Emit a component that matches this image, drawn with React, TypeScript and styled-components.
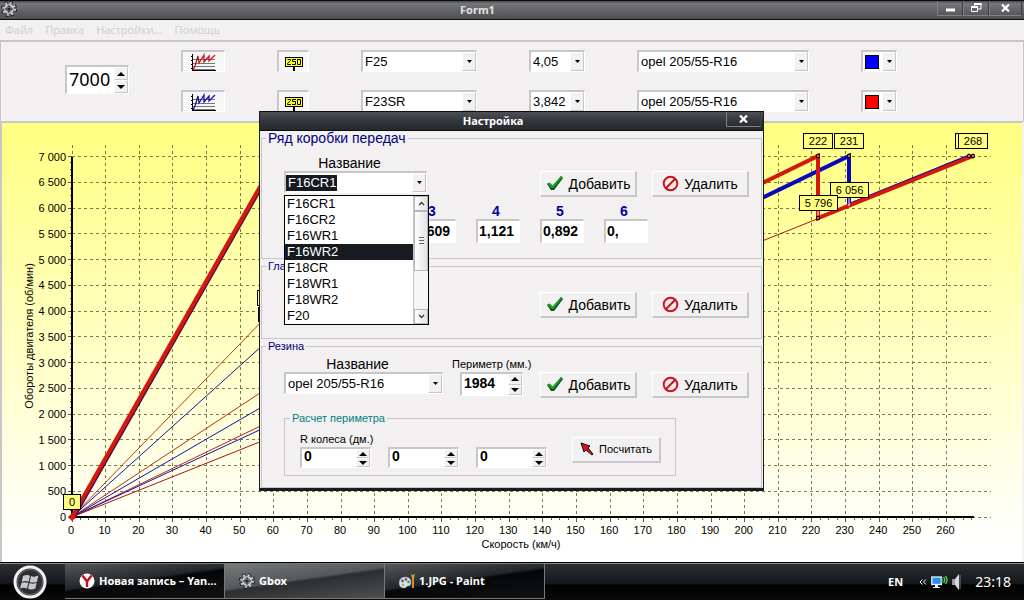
import React from "react";
import styled, { createGlobalStyle, css } from "styled-components";

const sans = '"Liberation Sans", Arial, sans-serif';
const ui = '"Noto Sans", "Open Sans", sans-serif';

const face = "#f2f0f1";
const shade = "#c8c6c8";

const Global = createGlobalStyle`
  *, *::before, *::after { box-sizing: border-box; }
  body { margin: 0; background: ${face}; font-family: ${sans}; font-size: 13px; color: #000; }
  button, input, select { font: inherit; color: inherit; margin: 0; border-radius: 0; }
`;

const sunken = css`
  border: 1px solid;
  border-width: 2px 1px 1px 2px;
  border-color: ${shade} #fff #fff ${shade};
`;

const raised = css`
  border: 1px solid;
  border-color: #fff ${shade} ${shade} #fff;
`;

/* ---------- window frame ---------- */

const Desktop = styled.div`
  position: relative;
  min-height: 100vh;
  display: flex;
  flex-direction: column;
`;

const TitleBar = styled.header<{ $dark?: boolean }>`
  display: flex;
  height: 20px;
  padding-right: 2px;
  color: ${(p) => (p.$dark ? "#fff" : "#e2e2e2")};
  border-top: 1px solid #0c0c10;
  border-bottom: 1px solid #0c0c10;
  background: ${(p) =>
    p.$dark
      ? "linear-gradient(#4c5054, #33373b 50%, #26292c)"
      : "linear-gradient(#4a4a4e, #77777a 15%, #606264 55%, #4d5053)"};
`;

const TitleIcon = styled.span`
  width: 18px;
  padding-left: 1px;
`;

const TitleText = styled.h1`
  flex: 1;
  margin: 0;
  text-align: center;
  font: bold 11px/18px ${ui};
`;

const CaptionButton = styled.button<{ $w: number }>`
  width: ${(p) => p.$w}px;
  height: 15px;
  padding: 0;
  display: grid;
  place-items: center;
  background: none;
  border: 1px solid #7e8285;
  border-top: 0;
  border-right-color: #3a3d40;
  color: #fff;
`;

const MenuBar = styled.nav`
  display: flex;
  gap: 12px;
  height: 20px;
  padding-left: 5px;
`;

const MenuItem = styled.button`
  padding: 0;
  border: 0;
  background: none;
  font: 11px/18px "Open Sans", ${ui};
  color: #cfcdcf;
`;

/* ---------- form controls ---------- */

const Toolbar = styled.section`
  display: flex;
  height: 81px;
  border: solid ${shade};
  border-width: 2px 1px 0 1px;
  padding: 8px 0 0 64px;
`;

const ToolGrid = styled.div`
  display: grid;
  grid-template-columns: 44px 32px 116px 56px 172px 36px;
  grid-auto-rows: 22px;
  gap: 18px 52px;
  margin-left: 52px;
`;

const ToolButton = styled.button`
  ${sunken}
  padding: 0;
  display: grid;
  place-items: start center;
  overflow: hidden;
  background: #f8f7f8;
`;

const SpinBox = styled.span<{ $w: number; $h: number }>`
  ${sunken}
  display: flex;
  width: ${(p) => p.$w}px;
  height: ${(p) => p.$h}px;
  background: #fff;
`;

const SpinInput = styled.input<{ $big?: boolean }>`
  flex: 1;
  min-width: 0;
  border: 0;
  padding: 0 0 3px 2px;
  background: none;
  outline: 0;
  font: ${(p) => (p.$big ? `18px/22px ${ui}` : `bold 14px/15px ${sans}`)};
`;

const SpinButtons = styled.span`
  display: flex;
  flex-direction: column;
  width: 14px;
`;

const SpinButton = styled.button`
  ${raised}
  flex: 1;
  min-height: 0;
  padding: 0;
  display: grid;
  place-items: center;
  background: ${face};
`;

const ComboBox = styled.span<{ $w?: number }>`
  ${sunken}
  display: flex;
  width: ${(p) => (p.$w ? `${p.$w}px` : "auto")};
  height: 22px;
  position: relative;
  background: #fff;
`;

const comboText = css`
  flex: 1;
  min-width: 0;
  border: 0;
  background: none;
  outline: 0;
  text-align: left;
  font: 13px/18px ${sans};
`;

const ComboSelect = styled.select`
  ${comboText}
  appearance: none;
  padding: 0 14px 0 2px;
`;

const ComboButton = styled.button`
  ${comboText}
  padding: 0 14px 0 0;
`;

const Selected = styled.span`
  display: inline-block;
  padding: 0 1px 0 2px;
  background: #161b21;
  color: #fff;
  line-height: 16px;
`;

const ComboArrow = styled.span`
  ${raised}
  position: absolute;
  inset: 0 0 0 auto;
  width: 14px;
  display: grid;
  place-items: center;
  background: ${face};
  pointer-events: none;
`;

const ColorButton = styled.button`
  ${sunken}
  position: relative;
  padding: 1px 2px;
  background: #fff;
`;

const Swatch = styled.span<{ $c: string }>`
  display: block;
  width: 14px;
  height: 14px;
  border: 1px solid #000;
  background: ${(p) => p.$c};
`;

/* ---------- settings dialog ---------- */

const Dialog = styled.section`
  position: absolute;
  left: calc(50% - 253px);
  top: 111px;
  width: 505px;
  background: ${face};
  border: solid #1a1d20;
  border-width: 0 1px 3px;
`;

const Group = styled.fieldset<{ $h: number; $top: number }>`
  margin: 0 1px;
  min-width: 0;
  height: ${(p) => p.$h}px;
  padding: ${(p) => p.$top}px 12px 0 22px;
  border: 1px solid ${shade};
`;

const Legend = styled.legend<{ $size: number; $color?: string; $pull: number }>`
  margin-left: ${(p) => -p.$pull}px;
  padding: 0 2px;
  font-size: ${(p) => p.$size}px;
  line-height: 14px;
  color: ${(p) => p.$color ?? "#000080"};
`;

const FieldRow = styled.div`
  display: flex;
  align-items: flex-start;
`;

const Field = styled.div<{ $w: number; $left?: number }>`
  position: relative;
  display: flex;
  flex-direction: column;
  width: ${(p) => p.$w}px;
  margin-left: ${(p) => p.$left ?? 0}px;
`;

const Caption = styled.label<{ $size: number; $center?: boolean }>`
  padding-right: ${(p) => (p.$center ? 12 : 0)}px;
  font-size: ${(p) => p.$size}px;
  line-height: 16px;
  white-space: nowrap;
  text-align: ${(p) => (p.$center ? "center" : "left")};
`;

const Actions = styled.div`
  display: flex;
  gap: 15px;
  margin: 16px 0 0 auto;
`;

const ActionButton = styled.button<{ $w: number; $size: number }>`
  border: 1px solid;
  border-width: 1px 2px 2px 1px;
  border-color: #fff ${shade} ${shade} #fff;
  display: flex;
  align-items: center;
  justify-content: center;
  gap: 5px;
  width: ${(p) => p.$w}px;
  height: 26px;
  padding: 0;
  background: ${face};
  font-size: ${(p) => p.$size}px;
  white-space: nowrap;
`;

const GearRow = styled.div`
  display: grid;
  grid-template-columns: repeat(4, 44px);
  gap: 20px;
  margin: 6px 0 0 128px;
`;

const GearField = styled.label`
  display: flex;
  flex-direction: column;
  font: bold 14px/16px ${sans};
  color: #0000a0;
  text-align: center;
`;

const GearNumber = styled.span`
  padding-right: 4px;
`;

const GearInput = styled.input`
  ${sunken}
  width: 100%;
  height: 24px;
  padding: 0 0 2px 1px;
  background: #fff;
  color: #000;
  outline: 0;
`;

const PerimeterBox = styled.fieldset`
  width: 392px;
  height: 65px;
  min-width: 0;
  margin: 13px 0 0;
  padding: 5px 13px 6px 15px;
  border: 1px solid ${shade};
  display: flex;
  align-items: center;
`;

const SpinRow = styled.div`
  display: flex;
  gap: 17px;
`;

const DropList = styled.ul`
  position: absolute;
  top: 40px;
  left: 0;
  z-index: 2;
  width: 145px;
  margin: 0;
  padding: 0 15px 0 0;
  border: 1px solid #000;
  background: #fff;
  list-style: none;
`;

const DropItem = styled.li<{ $on: boolean }>`
  padding-left: 2px;
  font: 13px/16px ${sans};
  background: ${(p) => (p.$on ? "#161b21" : "none")};
  color: ${(p) => (p.$on ? "#fff" : "#000")};
`;

const ScrollBar = styled.li`
  position: absolute;
  inset: 0 0 0 auto;
  width: 15px;
  display: flex;
  flex-direction: column;
  border-left: 1px solid ${shade};
  background: #f6f5f6;
`;

const ScrollPart = styled.span<{ $h: number }>`
  border: 1px solid #b8b6b8;
  height: ${(p) => p.$h}px;
  display: grid;
  place-items: center;
  background: linear-gradient(90deg, #fff, #e4e2e4);

  &:last-child { margin-top: auto; }
`;

/* ---------- chart ---------- */

const ChartFrame = styled.section`
  border: solid ${shade};
  border-width: 2px 2px 0;
  border-right-color: #f4f3f4;
  background: linear-gradient(#ffff80, #ffffff 96%);

  svg { display: block; width: 100%; height: auto; }
  text { font: 11px ${sans}; }
`;

/* ---------- taskbar ---------- */

const TaskBar = styled.footer`
  display: flex;
  height: 38px;
  margin-top: auto;
  border-top: 1px solid #000;
  background: linear-gradient(#8a8c8e 1px, #2b2f34 1px, #14171b 55%, #000 60%, #0a0a0a);
  color: #fff;
`;

const StartButton = styled.button`
  width: 65px;
  padding: 0 0 0 13px;
  border: 0;
  background: none;
  text-align: left;

  svg { display: block; }
`;

const Task = styled.button<{ $active?: boolean }>`
  display: flex;
  align-items: center;
  gap: 4px;
  width: 160px;
  height: 36px;
  padding: 0 0 0 14px;
  border: solid #77797b;
  border-width: 1px 1px 1px 0;
  background: ${(p) =>
    p.$active
      ? "linear-gradient(172deg, #77797b, #55585a 45%, #2c2e30 50%, #4d4f51)"
      : "linear-gradient(172deg, #55585b, #24272a 45%, #060708 50%, #101112)"};
  font: bold 11px/16px ${ui};
  color: #fff;
  white-space: nowrap;
`;

const Tray = styled.div`
  display: flex;
  align-items: center;
  margin-left: auto;
  padding-right: 13px;
  font: bold 11px/16px ${ui};
`;

const Clock = styled.time`
  margin-left: 13px;
  font: 14px/16px ${ui};
`;

const TrayIcons = styled.span`
  display: flex;
  align-items: center;
  gap: 4px;
  margin-left: 16px;
`;

/* ---------- drawings ---------- */

const Tri = ({ up, w = 8 }: { up?: boolean; w?: number }) => {
  const h = Math.ceil(w / 2);
  return (
    <svg width={w} height={h} viewBox={`0 0 ${w} ${h}`} aria-hidden>
      <path d={up ? `M0 ${h}L${w / 2} 0L${w} ${h}z` : `M0 0L${w} 0L${w / 2} ${h}z`} fill="#000" />
    </svg>
  );
};

const Chevron = ({ up }: { up?: boolean }) => (
  <svg width="7" height="5" viewBox="0 0 7 5" aria-hidden>
    <path d={up ? "M1 4L3.500 1.500L6 4" : "M1 1L3.500 3.500L6 1"} fill="none" stroke="#444" strokeWidth="1.500" />
  </svg>
);

const Gear = () => (
  <svg width="16" height="16" viewBox="0 0 16 16" aria-hidden>
    <circle cx="8" cy="8" r="6" fill="none" stroke="#16181a" strokeWidth="4" strokeDasharray="2.600 2.110" />
    <circle cx="8" cy="8" r="5.800" fill="none" stroke="#c9cbcb" strokeWidth="2.400" strokeDasharray="2 2.555" />
    <circle cx="8" cy="8" r="4" fill="#7a7d7e" stroke="#d5d7d7" strokeWidth="1.600" />
    <circle cx="8" cy="8" r="1.600" fill="#222" />
    <path d="M8 4v2M8 10v2M4 8h2M10 8h2" stroke="#222" />
  </svg>
);

const CloseGlyph = () => (
  <svg width="9" height="8" viewBox="0 0 9 8" aria-hidden>
    <path d="M1 0.500L8 7.500M8 0.500L1 7.500" stroke="#fff" strokeWidth="2.200" />
  </svg>
);

const CurveIcon = ({ color }: { color: string }) => (
  <svg width="26" height="21" viewBox="0 0 26 21" aria-hidden>
    <path d="M2 7.500h22M2 11.500h22M2 14.500h22M2 17.500h22" stroke="#777" shapeRendering="crispEdges" />
    <path
      d="M1.500 2v16.500H25M5.500 18v3M8.500 18v3M11.500 18v3M14.500 18v3M17.500 18v3M20.500 18v3M23.500 18v3M0 4.500h1M0 8.500h1M0 12.500h1M0 16.500h1"
      fill="none"
      stroke="#000"
      shapeRendering="crispEdges"
    />
    <path d="M2 18L4 14L7 4L8 11L13 3V10L18 4V9L24 3" fill="none" stroke={color} strokeWidth="1.300" />
  </svg>
);

const SignIcon = () => (
  <svg width="20" height="19" viewBox="0 0 20 19" aria-hidden>
    <rect x="1.500" y="5.500" width="17" height="9" fill="#ffff30" stroke="#000" />
    <path d="M3.500 7.500h3v1l-3 3v1h3.500M12 7.500H8.500v2H11.500v3H8M13.500 7.500h3v5h-3z" fill="none" stroke="#000" />
    <path d="M10 15v4" stroke="#000" strokeWidth="2" />
  </svg>
);

const CheckIcon = () => (
  <svg width="18" height="17" viewBox="0 0 18 17" aria-hidden>
    <path d="M1 9L4 8L7 11L15 1L17 3L8 15L5 15z" fill="#0b4f12" />
    <path d="M1 8.500L3.500 7.500L6.500 10.500L15 1L16.500 2L7.500 13L5.500 13z" fill="#18a025" />
  </svg>
);

const BanIcon = () => (
  <svg width="17" height="17" viewBox="0 0 17 17" aria-hidden>
    <circle cx="8.500" cy="8.500" r="6.800" fill="#fbe9ea" stroke="#c4161f" strokeWidth="2" />
    <path d="M4 13L13 4" stroke="#c4161f" strokeWidth="2" />
  </svg>
);

const PointerIcon = () => (
  <svg width="14" height="14" viewBox="0 0 14 14" aria-hidden>
    <path d="M1 1L10 4L8 6L13 12L12 13L6 8L4 10z" fill="#d3161c" stroke="#200608" strokeWidth="1" />
  </svg>
);

const StartOrb = () => (
  <svg width="34" height="36" viewBox="0 0 34 36" aria-hidden>
    <circle cx="17" cy="18" r="15" fill="#2c2e31" stroke="#f2f2f2" strokeWidth="3" />
    <circle cx="17" cy="18" r="12.500" fill="none" stroke="#6a6d70" />
    <path
      d="M10 12q3.500-2 7-.3l-1.400 6q-3.300-1.500-6.900.2zM18 12q3.500 1.500 7.500-.5l-1.500 6.200q-3.800 1.700-7.300.2zM8.400 19q3.400-1.600 6.900-.1L14 24.600q-3.200-1.500-6.800 0zM16.400 19.100q3.600 1.500 7.300-.3L22.300 24.500q-3.600 1.800-7.200.3z"
      fill="#c6c8c9"
    />
  </svg>
);

const BrowserIcon = () => (
  <svg width="16" height="16" viewBox="0 0 16 16" aria-hidden>
    <circle cx="8" cy="8" r="7.500" fill="#fff" />
    <path d="M3.500 2.500L8 8.500V14M12.500 2.500L8 8.500" fill="none" stroke="#c3121d" strokeWidth="2.400" />
  </svg>
);

const PaintIcon = () => (
  <svg width="16" height="16" viewBox="0 0 16 16" aria-hidden>
    <path d="M6 4C2 4 0 7 0 10s2 5 5 5 2-2 4-2 3-1 3-4-2-5-6-5z" fill="#cfe6ee" stroke="#5b8ba0" strokeWidth=".5" />
    <circle cx="3.500" cy="8" r="1.400" fill="#2a68c8" />
    <circle cx="7" cy="6.500" r="1.400" fill="#d8362c" />
    <circle cx="9.500" cy="9" r="1.300" fill="#2f9a3a" />
    <circle cx="4" cy="12" r="1.300" fill="#e8a020" />
    <path d="M13 6h2v9h-2z" fill="#e6862a" />
    <path d="M13 6l-1-5 2 1 2-1-1 5z" fill="#c89a50" />
  </svg>
);

const NetworkIcon = () => (
  <svg width="17" height="14" viewBox="0 0 17 14" aria-hidden>
    <rect x=".8" y="2" width="9.500" height="7.500" fill="#2f8fe8" stroke="#e8f4ff" strokeWidth="1.300" />
    <path d="M4 10h3v2h2v1H2v-1h2z" fill="#e8f4ff" />
    <path d="M10.500 3q1.500 2 0 4M12.500 2q2.500 3 0 6M14.500 1q3 4 0 8" fill="none" stroke="#4fd040" strokeWidth="1.300" />
  </svg>
);

const SpeakerIcon = () => (
  <svg width="10" height="16" viewBox="0 0 10 16" aria-hidden>
    <path d="M0 5h3v6H0z" fill="#9a9a9e" />
    <path d="M3 5L7 0v16L3 11z" fill="#d8d8dc" />
    <path d="M8 1v14" stroke="#77777b" />
  </svg>
);

/* ---------- composed controls ---------- */

const Combo = ({ value, label, w, id }: { value: string; label: string; w?: number; id?: string }) => (
  <ComboBox $w={w}>
    <ComboSelect id={id} aria-label={label} defaultValue={value}>
      <option>{value}</option>
    </ComboSelect>
    <ComboArrow>
      <Tri w={5} />
    </ComboArrow>
  </ComboBox>
);

const Spin = (p: { value: string; label: string; w: number; h: number; big?: boolean; id?: string }) => (
  <SpinBox $w={p.w} $h={p.h}>
    <SpinInput id={p.id} aria-label={p.label} defaultValue={p.value} $big={p.big} />
    <SpinButtons>
      <SpinButton aria-label="Больше">
        <Tri up />
      </SpinButton>
      <SpinButton aria-label="Меньше">
        <Tri />
      </SpinButton>
    </SpinButtons>
  </SpinBox>
);

const AddRemove = () => (
  <Actions>
    <ActionButton $w={97} $size={14}>
      <CheckIcon />
      Добавить
    </ActionButton>
    <ActionButton $w={97} $size={14}>
      <BanIcon />
      Удалить
    </ActionButton>
  </Actions>
);

/* ---------- chart plot ---------- */

const px = (speed: number) => 70 + speed * 3.3635;
const py = (rpm: number) => 394 - rpm * 0.0515;
const range = (n: number) => Array.from({ length: n }, (_, i) => i);
const RED = "#d4180c";
const BLUE = "#0808b8";

const thinLines: [number, number, string][] = [
  [104, 7000, "#b8400c"],
  [119, 7000, "#1414a0"],
  [162.5, 7000, "#b8300c"],
  [185, 7000, "#1414a0"],
  [222, 7000, "#b82020"],
  [231, 7000, "#1414a0"],
  [268, 7000, "#a01818"],
];

const marks: [number, number, number, string][] = [
  [953, 10, 29, ""],
  [956, 10, 29, "268"],
  [801, 10, 29, "222"],
  [832, 10, 29, "231"],
  [828, 59, 38, "6 056"],
  [797, 72, 38, "5 796"],
  [61, 371, 17, "0"],
  [255, 167, 29, ""],
];

const Chart = () => (
  <ChartFrame>
    <svg viewBox="0 0 1020 439" role="img" aria-label="Обороты двигателя от скорости">
      <g stroke="#7c7c46" strokeDasharray="3 3" shapeRendering="crispEdges">
        {range(27).map((i) => (
          <line key={i} x1={px(i * 10)} x2={px(i * 10)} y1={22} y2={394} />
        ))}
        {range(15).map((i) => (
          <line key={i} x1={70} x2={989} y1={py(i * 500)} y2={py(i * 500)} />
        ))}
      </g>
      <g stroke="#555" shapeRendering="crispEdges">
        {range(108).map((i) => (
          <line key={i} x1={px(i * 2.5)} x2={px(i * 2.5)} y1={394} y2={i % 4 ? 397 : 399} />
        ))}
        {range(57).map((i) => (
          <line key={i} y1={py(i * 125)} y2={py(i * 125)} x1={i % 4 ? 68 : 66} x2={70} />
        ))}
      </g>
      <path d={`M70 ${py(7000)}V394H972`} fill="none" stroke="#000" strokeWidth="2" shapeRendering="crispEdges" />
      {thinLines.map(([v, r, c]) => (
        <line key={v} x1={70} y1={394} x2={px(v)} y2={py(r)} stroke={c} />
      ))}
      <g fill="none" strokeWidth="4">
        <path d={`M71 395L${px(61.4)} ${py(7000)}`} stroke="#4a0a50" />
        <path d={`M70 394L${px(61)} ${py(7000)}`} stroke={RED} />
        <path d={`M${px(185)} ${py(5560)}L847 33V82L968 33`} stroke={BLUE} />
        <path d={`M${px(162.5)} ${py(5130)}L816 33V95L971 33`} stroke={RED} />
      </g>
      <path d="M847 74v9M816 87v9" stroke="#fff" />
      <g fill="#fff" stroke="#300" strokeWidth="1.500">
        {[[816, 33], [847, 33], [967, 33], [971, 33], [816, 95]].map(([x, y]) => (
          <ellipse key={`${x}-${y}`} cx={x} cy={y} rx="1.400" ry="1.800" />
        ))}
      </g>
      <path d="M66 394l4-4l4 4l-4 4z" fill={RED} />
      <path d="M257 184v15" stroke="#000" strokeWidth="2" />
      {marks.map(([x, y, w, t]) => (
        <g key={`${x}-${y}`}>
          <rect x={x + 0.5} y={y + 0.5} width={w} height={15} fill="#ffff80" stroke="#000" />
          {t && (
            <text x={x + w / 2 + 0.5} y={y + 12} textAnchor="middle">
              {t}
            </text>
          )}
        </g>
      ))}
      {range(15).map((i) => (
        <text key={i} x={64} y={py(i * 500) + 4} textAnchor="end">
          {i < 2 ? i * 500 : `${Math.floor(i / 2)} ${i % 2 ? "500" : "000"}`}
        </text>
      ))}
      {range(27).map((i) => (
        <text key={i} x={px(i * 10) - 1} y={411} textAnchor="middle">
          {i * 10}
        </text>
      ))}
      <text x={519} y={425} textAnchor="middle">
        Скорость (км/ч)
      </text>
      <text transform="translate(31 213) rotate(-90)" textAnchor="middle">
        Обороты двигателя (об/мин)
      </text>
    </svg>
  </ChartFrame>
);

/* ---------- dialog ---------- */

const boxes = ["F16CR1", "F16CR2", "F16WR1", "F16WR2", "F18CR", "F18WR1", "F18WR2", "F20"];
const upperGears: [number, string][] = [
  [3, "1,609"],
  [4, "1,121"],
  [5, "0,892"],
  [6, "0,"],
];

const Settings = () => (
  <Dialog role="dialog" aria-label="Настройка">
    <TitleBar $dark>
      <TitleText as="h2">Настройка</TitleText>
      <CaptionButton $w={35} aria-label="Закрыть">
        <CloseGlyph />
      </CaptionButton>
    </TitleBar>
    <Group $h={128} $top={10}>
      <Legend $size={14} $pull={18}>
        Ряд коробки передач
      </Legend>
      <FieldRow>
        <Field $w={143}>
          <Caption $size={14} $center htmlFor="gearbox">
            Название
          </Caption>
          <ComboBox>
            <ComboButton id="gearbox" aria-haspopup="listbox" aria-expanded>
              <Selected>F16CR1</Selected>
            </ComboButton>
            <ComboArrow>
              <Tri w={5} />
            </ComboArrow>
          </ComboBox>
          <DropList role="listbox">
            {boxes.map((b) => (
              <DropItem key={b} role="option" $on={b === "F16WR2"} aria-selected={b === "F16WR2"}>
                {b}
              </DropItem>
            ))}
            <ScrollBar aria-hidden>
              <ScrollPart $h={15}>
                <Chevron up />
              </ScrollPart>
              <ScrollPart $h={60}>
                <svg width="7" height="8" viewBox="0 0 7 8">
                  <path d="M1 .5h5M1 3.500h5M1 6.500h5" stroke="#666" />
                </svg>
              </ScrollPart>
              <ScrollPart $h={15}>
                <Chevron />
              </ScrollPart>
            </ScrollBar>
          </DropList>
        </Field>
        <AddRemove />
      </FieldRow>
      <GearRow>
        {upperGears.map(([n, ratio]) => (
          <GearField key={n}>
            <GearNumber>{n}</GearNumber>
            <GearInput defaultValue={ratio} />
          </GearField>
        ))}
      </GearRow>
    </Group>
    <Group $h={80} $top={3}>
      <Legend $size={11} $pull={18}>
        Гла
      </Legend>
      <FieldRow>
        <AddRemove />
      </FieldRow>
    </Group>
    <Group $h={149} $top={3}>
      <Legend $size={11} $pull={18}>
        Резина
      </Legend>
      <FieldRow>
        <Field $w={159}>
          <Caption $size={14} $center htmlFor="tyre">
            Название
          </Caption>
          <Combo id="tyre" label="Название" value="opel 205/55-R16" />
        </Field>
        <Field $w={72} $left={9}>
          <Caption $size={11} htmlFor="perimeter">
            Периметр (мм.)
          </Caption>
          <Field $w={63} $left={8}>
            <Spin id="perimeter" label="Периметр" value="1984" w={63} h={24} />
          </Field>
        </Field>
        <AddRemove />
      </FieldRow>
      <PerimeterBox>
        <Legend $size={11} $color="#008080" $pull={10}>
          Расчет периметра
        </Legend>
        <Field $w={247}>
          <Caption $size={11} htmlFor="radius">
            R колеса (дм.)
          </Caption>
          <SpinRow>
            <Spin id="radius" label="R колеса" value="0" w={71} h={21} />
            <Spin label="Ширина" value="0" w={71} h={21} />
            <Spin label="Профиль" value="0" w={71} h={21} />
          </SpinRow>
        </Field>
        <Field $w={89} $left={25}>
          <ActionButton $w={89} $size={11}>
            <PointerIcon />
            Посчитать
          </ActionButton>
        </Field>
      </PerimeterBox>
    </Group>
  </Dialog>
);

/* ---------- page ---------- */

const rows = [
  { curve: "#c01820", box: "F25", ratio: "4,05", color: "#0000ff" },
  { curve: "#1414a0", box: "F23SR", ratio: "3,842", color: "#ff0000" },
];

const RevSlot = styled.div`
  display: flex;
  align-items: flex-start;
  padding-top: 15px;
`;

export default function App() {
  return (
    <Desktop>
      <Global />
      <TitleBar>
        <TitleIcon>
          <Gear />
        </TitleIcon>
        <TitleText>Form1</TitleText>
        <CaptionButton $w={26} aria-label="Свернуть">
          <svg width="9" height="8" viewBox="0 0 9 8" aria-hidden>
            <path d="M0 6h9" stroke="#fff" strokeWidth="3" />
          </svg>
        </CaptionButton>
        <CaptionButton $w={26} aria-label="Восстановить">
          <svg width="11" height="10" viewBox="0 0 11 10" aria-hidden>
            <path d="M.5 3.500h6v5h-6zM3.500 3V.5h6.500v5.500H7" fill="none" stroke="#fff" />
            <path d="M0 4h7M3 1h7.500" stroke="#fff" strokeWidth="2" />
          </svg>
        </CaptionButton>
        <CaptionButton $w={33} aria-label="Закрыть">
          <CloseGlyph />
        </CaptionButton>
      </TitleBar>
      <MenuBar>
        {["Файл", "Правка", "Настройки...", "Помощь"].map((m) => (
          <MenuItem key={m}>{m}</MenuItem>
        ))}
      </MenuBar>
      <Toolbar>
        <RevSlot>
          <Spin label="Обороты" value="7000" w={64} h={29} big />
        </RevSlot>
        <ToolGrid>
          {rows.map((r) => (
            <React.Fragment key={r.box}>
              <ToolButton aria-label="Кривая">
                <CurveIcon color={r.curve} />
              </ToolButton>
              <ToolButton aria-label="Метки">
                <SignIcon />
              </ToolButton>
              <Combo label="Коробка" value={r.box} />
              <Combo label="Главная пара" value={r.ratio} />
              <Combo label="Резина" value="opel 205/55-R16" />
              <ColorButton aria-label="Цвет">
                <Swatch $c={r.color} />
                <ComboArrow>
                  <Tri w={5} />
                </ComboArrow>
              </ColorButton>
            </React.Fragment>
          ))}
        </ToolGrid>
      </Toolbar>
      <Chart />
      <TaskBar>
        <StartButton aria-label="Пуск">
          <StartOrb />
        </StartButton>
        <Task>
          <BrowserIcon />
          Новая запись – Yan...
        </Task>
        <Task $active>
          <Gear />
          Gbox
        </Task>
        <Task>
          <PaintIcon />
          1.JPG - Paint
        </Task>
        <Tray>
          EN
          <TrayIcons>
            <svg width="8" height="6" viewBox="0 0 8 6" aria-hidden>
              <path d="M3.500 .5L1 3l2.500 2.500M7 .5L4.500 3L7 5.500" fill="none" stroke="#fff" />
            </svg>
            <NetworkIcon />
            <SpeakerIcon />
          </TrayIcons>
          <Clock>23:18</Clock>
        </Tray>
      </TaskBar>
      <Settings />
    </Desktop>
  );
}
